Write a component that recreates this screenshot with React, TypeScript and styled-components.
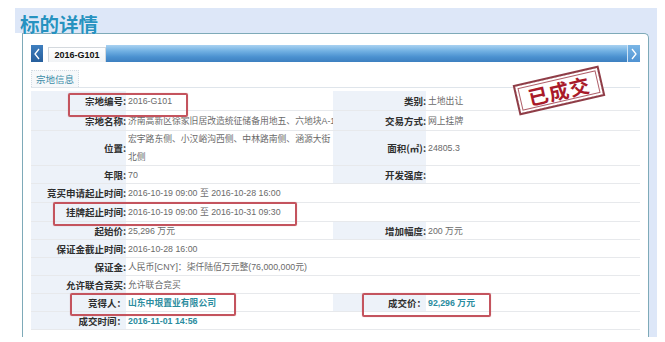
import React from "react";
import styled, { createGlobalStyle } from "styled-components";

const Global = createGlobalStyle`
  html, body { margin: 0; padding: 0; background: #fff; }
  body { font-family: "Liberation Sans", "Noto Sans CJK SC", sans-serif; }
`;

const Page = styled.div`
  width: 642px;
  margin-left: 15px;
  padding-top: 8px;
  display: flex;
  flex-direction: column;
`;

const Header = styled.div`
  height: 25px;
  background: #dde7f8;
  padding-left: 5px;
  display: flex;
  align-items: flex-end;
`;

const Title = styled.h1`
  margin: 0;
  font: bold 19.5px/22px "Noto Sans CJK SC", sans-serif;
  color: #2792c0;
  text-shadow: 0 0 1px #fff;
  transform: translateY(2px);
`;

const Body = styled.div`
  height: 304px;
  display: flex;
  padding: 0 10px 0 7px;
  background: linear-gradient(to right, #fff 7px, #dde7f8 7px);
`;

const Panel = styled.div`
  flex: 1;
  background: #fff;
  border: 1px solid #7eaab8;
  border-bottom: none;
  border-top-right-radius: 5px;
  padding: 11px 8px 0 8px;
  display: flex;
  flex-direction: column;
`;

const TabBar = styled.div`
  display: flex;
  height: 17px;
`;

const NavBtn = styled.div<{ $dark?: boolean }>`
  width: ${(p) => (p.$dark ? 12 : 13)}px;
  height: 17px;
  display: flex;
  align-items: center;
  justify-content: center;
  background: ${(p) =>
    p.$dark
      ? "linear-gradient(#3f7fbf, #275f9c)"
      : "linear-gradient(#7ab6e6, #4f92d2)"};
  box-shadow: ${(p) => (p.$dark ? "none" : "inset 1px 0 0 #cfe4f5")};
`;

const Tab = styled.div`
  margin: 2px 0 0 5px;
  width: 58px;
  height: 15px;
  box-sizing: border-box;
  border: 1px solid #d4d9de;
  border-bottom: none;
  background: linear-gradient(#ffffff, #f1f3f5);
  font: bold 9px/14px "Liberation Sans", sans-serif;
  color: #111;
  text-align: center;
`;

const Bar = styled.div`
  flex: 1;
  background: linear-gradient(#a9d2f1 0%, #72b1e3 35%, #4b91d0 70%, #3d80c0 100%);
`;

const SectionHead = styled.div`
  margin-top: 8px;
  border-bottom: 1px solid #dfe5eb;
  display: flex;
`;

const SectionLabel = styled.div`
  height: 17px;
  box-sizing: border-box;
  padding: 0 4px;
  border: 1px dotted #d3dbe3;
  border-bottom: none;
  background: #f6f8fa;
  color: #3b8ba7;
  font: 9.5px/16px "Noto Sans CJK SC", sans-serif;
`;

const TableWrap = styled.div`
  position: relative;
  margin-top: 3px;
  width: 609px;
`;

const Row = styled.div<{ $h: number }>`
  display: grid;
  grid-template-columns: 95px 207px 93px 1fr;
  height: ${(p) => p.$h}px;
  border-bottom: 1px solid #e7e9ec;
  box-sizing: border-box;
`;

const Label = styled.div`
  background: #edf2f9;
  display: flex;
  align-items: center;
  justify-content: flex-end;
  font: bold 9.5px/12px "Noto Sans CJK SC", sans-serif;
  color: #2e2e2e;
  white-space: nowrap;
`;

const Value = styled.div<{ $span?: boolean; $accent?: boolean }>`
  grid-column: ${(p) => (p.$span ? "span 3" : "auto")};
  display: flex;
  align-items: center;
  padding-left: 2px;
  overflow: hidden;
  white-space: nowrap;
  font-size: 8.8px;
  line-height: 18px;
  font-weight: ${(p) => (p.$accent ? "bold" : "normal")};
  color: ${(p) => (p.$accent ? "#2b8c9e" : "#6a6a6a")};
  background: #fff;
`;

const Mark = styled.div`
  position: absolute;
  border: 2px solid #c4545e;
  border-radius: 2px;
  box-shadow: 0 0 1px rgba(180, 60, 70, 0.5);
  pointer-events: none;
`;

const Stamp = styled.div`
  position: absolute;
  left: 484px;
  top: -16px;
  width: 88px;
  height: 31px;
  box-sizing: border-box;
  border: 2px solid #8f3d47;
  box-shadow: inset 0 0 0 2px #fff, inset 0 0 0 3px #b0606a;
  background: rgba(255, 255, 255, 0.85);
  transform: rotate(-13deg);
  display: flex;
  align-items: center;
  justify-content: center;
  font: bold 20px/22px "Noto Sans CJK SC", sans-serif;
  letter-spacing: 1px;
  color: #a91a2a;
`;

const Chevron = ({ left }: { left?: boolean }) => (
  <svg width="8" height="12" viewBox="0 0 8 12">
    <polyline
      points={left ? "6,1 2,6 6,11" : "2,1 6,6 2,11"}
      fill="none"
      stroke="#fff"
      strokeWidth="1.3"
    />
  </svg>
);

type RowData = {
  h: number;
  l1: string;
  v1: React.ReactNode;
  l2?: string;
  v2?: string;
  span?: boolean;
  accent1?: boolean;
  accent2?: boolean;
};

const rows: RowData[] = [
  { h: 20, l1: "宗地编号:", v1: "2016-G101", l2: "类别:", v2: "土地出让" },
  {
    h: 20,
    l1: "宗地名称:",
    v1: "济南高新区徐家旧居改造统征储备用地五、六地块A-1",
    l2: "交易方式:",
    v2: "网上挂牌",
  },
  {
    h: 35,
    l1: "位置:",
    v1: (
      <span>
        宏宇路东侧、小汉峪沟西侧、中林路南侧、涵源大街
        <br />
        北侧
      </span>
    ),
    l2: "面积(㎡):",
    v2: "24805.3",
  },
  { h: 18, l1: "年限:", v1: "70", l2: "开发强度:", v2: "" },
  { h: 19, l1: "竞买申请起止时间:", v1: "2016-10-19 09:00 至 2016-10-28 16:00", span: true },
  { h: 19, l1: "挂牌起止时间:", v1: "2016-10-19 09:00 至 2016-10-31 09:30", span: true },
  { h: 18, l1: "起始价:", v1: "25,296 万元", l2: "增加幅度:", v2: "200 万元" },
  { h: 18, l1: "保证金截止时间:", v1: "2016-10-28 16:00", span: true },
  { h: 18, l1: "保证金:", v1: "人民币[CNY]：柒仟陆佰万元整(76,000,000元)", span: true },
  { h: 18, l1: "允许联合竞买:", v1: "允许联合竞买", span: true },
  {
    h: 18,
    l1: "竞得人：",
    v1: "山东中垠置业有限公司",
    accent1: true,
    l2: "成交价：",
    v2: "92,296 万元",
    accent2: true,
  },
  { h: 18, l1: "成交时间：", v1: "2016-11-01 14:56", span: true, accent1: true },
];

const marks = [
  { x: 37, y: 2, w: 116, h: 20 },
  { x: 22, y: 111, w: 240, h: 20 },
  { x: 39, y: 202, w: 162, h: 19 },
  { x: 331, y: 202, w: 125, h: 20 },
];

export default function App() {
  return (
    <>
      <Global />
      <Page>
        <Header>
          <Title>标的详情</Title>
        </Header>
        <Body>
          <Panel>
            <TabBar>
              <NavBtn $dark>
                <Chevron left />
              </NavBtn>
              <Tab>2016-G101</Tab>
              <Bar />
              <NavBtn>
                <Chevron />
              </NavBtn>
            </TabBar>
            <SectionHead>
              <SectionLabel>宗地信息</SectionLabel>
            </SectionHead>
            <TableWrap>
              {rows.map((r, i) => (
                <Row key={i} $h={r.h}>
                  <Label>{r.l1}</Label>
                  <Value $span={r.span} $accent={r.accent1}>
                    {r.v1}
                  </Value>
                  {!r.span && (
                    <>
                      <Label>{r.l2}</Label>
                      <Value $accent={r.accent2}>{r.v2}</Value>
                    </>
                  )}
                </Row>
              ))}
              {marks.map((m, i) => (
                <Mark
                  key={i}
                  style={{ left: m.x, top: m.y, width: m.w, height: m.h }}
                />
              ))}
              <Stamp>已成交</Stamp>
            </TableWrap>
          </Panel>
        </Body>
      </Page>
    </>
  );
}
